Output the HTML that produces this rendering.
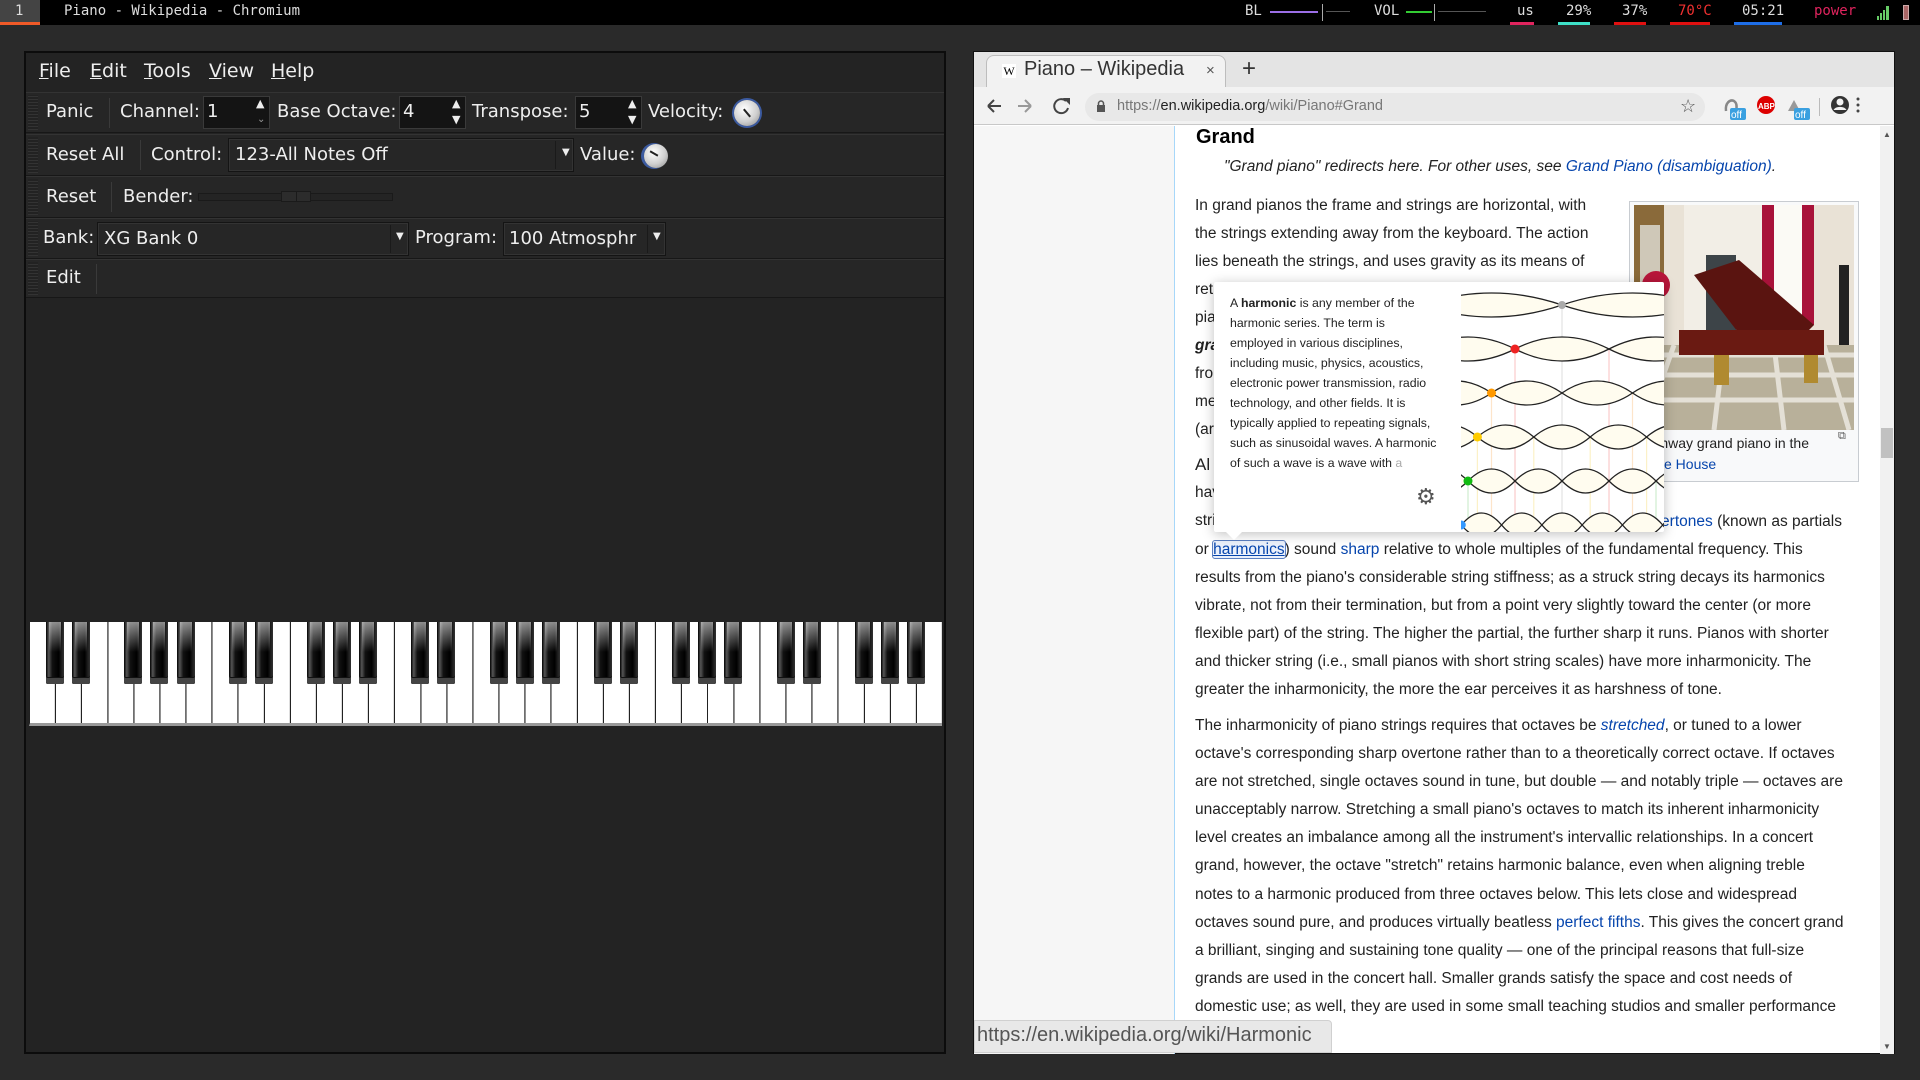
<!DOCTYPE html>
<html><head><meta charset="utf-8"><style>
*{box-sizing:border-box;margin:0;padding:0}
body{width:1920px;height:1080px;overflow:hidden;background:#2a2a2a;position:relative;font-family:"Liberation Sans",sans-serif}
.a{position:absolute}
#top{left:0;top:0;width:1920px;height:25px;background:#000;font-family:"DejaVu Sans Mono","Liberation Mono",monospace;font-size:14px;color:#ddd}
#top span{position:absolute;top:3px;white-space:nowrap}
.ul{position:absolute;top:22px;height:3px}
#lw{left:24px;top:51px;width:922px;height:1003px;background:#232323;border:2px solid #0c0c0c;font-family:"DejaVu Sans",sans-serif;font-size:18px;color:#eee}
.row{position:absolute;left:0;width:918px;background:#262626;border-top:1px solid #333;border-bottom:1px solid #171717}
.row:before{content:"";position:absolute;left:2px;top:2px;bottom:2px;width:10px;background:repeating-linear-gradient(0deg,#333 0 1px,#222 1px 3px)}
.t{position:absolute;white-space:nowrap}
.sep{position:absolute;width:1px;background:#3a3a3a}
.ent{position:absolute;background:#141414;border:1px solid #3a3a3a}
.cmb{position:absolute;background:#262626;border:1px solid #141414;box-shadow:inset 0 0 0 1px #333}
.knob{position:absolute;border-radius:50%;background:radial-gradient(circle at 40% 35%,#fff,#cfcfcf 55%,#888);box-shadow:0 0 0 2px #3b5aa0}
#bw{left:973px;top:51px;width:922px;height:1003px;background:#fff;border:1px solid #111}
.wl{position:absolute;left:1195px;white-space:nowrap;font-size:15.5px;color:#222;line-height:28px}
a,.lk{color:#0645ad;text-decoration:none}
</style></head><body>
<div id="top" class="a">
 <div class="a" style="left:0;top:0;width:40px;height:25px;background:#444"></div>
 <div class="ul" style="left:0;width:40px;background:#f05a28"></div>
 <span style="left:15px">1</span>
 <span style="left:64px">Piano - Wikipedia - Chromium</span>
 <span style="left:1245px">BL</span>
 <div class="a" style="left:1270px;top:11px;width:48px;height:2px;background:#9b6ee6"></div>
 <div class="a" style="left:1322px;top:4px;width:1px;height:17px;background:#aaa"></div>
 <div class="a" style="left:1326px;top:11px;width:24px;height:1px;background:#555"></div>
 <span style="left:1374px">VOL</span>
 <div class="a" style="left:1406px;top:11px;width:26px;height:2px;background:#3c3"></div>
 <div class="a" style="left:1434px;top:4px;width:1px;height:17px;background:#aaa"></div>
 <div class="a" style="left:1438px;top:11px;width:48px;height:1px;background:#555"></div>
 <span style="left:1517px">us</span><div class="ul" style="left:1510px;width:24px;background:#e0245e"></div>
 <span style="left:1566px">29%</span><div class="ul" style="left:1558px;width:32px;background:#3ee0c8"></div>
 <span style="left:1622px">37%</span><div class="ul" style="left:1614px;width:32px;background:#e01010"></div>
 <span style="left:1678px;color:#f03030">70°C</span><div class="ul" style="left:1670px;width:40px;background:#e01010"></div>
 <span style="left:1742px">05:21</span><div class="ul" style="left:1734px;width:48px;background:#1e6ee8"></div>
 <span style="left:1814px;color:#e0245e">power</span>
 <svg class="a" style="left:1876px;top:5px" width="14" height="15"><path d="M1 15V11h2v4zM4 15V8h2v7zM7 15V5h2v10zM10 15V1h3v14z" fill="#6c6"/></svg>
 <div class="a" style="left:1903px;top:5px;width:6px;height:15px;background:#a66;border:1px solid #caa"></div>
</div>

<div id="lw" class="a">
 <div class="t" style="left:13px;top:7px;font-size:19px"><u>F</u>ile</div>
 <div class="t" style="left:64px;top:7px;font-size:19px"><u>E</u>dit</div>
 <div class="t" style="left:118px;top:7px;font-size:19px"><u>T</u>ools</div>
 <div class="t" style="left:183px;top:7px;font-size:19px"><u>V</u>iew</div>
 <div class="t" style="left:245px;top:7px;font-size:19px"><u>H</u>elp</div>

 <div class="row" style="top:39px;height:41px">
  <div class="t" style="left:20px;top:8px">Panic</div><div class="sep" style="left:83px;top:5px;height:30px"></div>
  <div class="t" style="left:94px;top:8px">Channel:</div>
  <div class="ent" style="left:177px;top:3px;width:67px;height:33px"><div class="t" style="left:3px;top:4px">1</div><div class="t" style="left:52px;top:0;font-size:11px">▲</div><div class="t" style="left:53px;top:17px;font-size:10px;color:#999">⌄</div></div>
  <div class="t" style="left:251px;top:8px">Base Octave:</div>
  <div class="ent" style="left:373px;top:3px;width:67px;height:33px"><div class="t" style="left:3px;top:4px">4</div><div class="t" style="left:52px;top:0;font-size:11px">▲</div><div class="t" style="left:52px;top:16px;font-size:11px">▼</div></div>
  <div class="t" style="left:446px;top:8px">Transpose:</div>
  <div class="ent" style="left:549px;top:3px;width:67px;height:33px"><div class="t" style="left:3px;top:4px">5</div><div class="t" style="left:52px;top:0;font-size:11px">▲</div><div class="t" style="left:52px;top:16px;font-size:11px">▼</div></div>
  <div class="t" style="left:622px;top:8px">Velocity:</div>
  <div class="knob" style="left:708px;top:7px;width:26px;height:26px"><div class="a" style="left:12px;top:8px;width:2px;height:10px;background:#222;transform:rotate(-40deg)"></div></div>
 </div>
 <div class="row" style="top:81px;height:42px">
  <div class="t" style="left:20px;top:9px">Reset All</div><div class="sep" style="left:114px;top:5px;height:30px"></div>
  <div class="t" style="left:125px;top:9px">Control:</div>
  <div class="cmb" style="left:202px;top:3px;width:346px;height:34px"><div class="t" style="left:6px;top:5px">123-All Notes Off</div><div class="sep" style="left:326px;top:2px;height:28px;background:#1a1a1a"></div><div class="t" style="left:333px;top:8px;font-size:10px">▼</div></div>
  <div class="t" style="left:554px;top:9px">Value:</div>
  <div class="knob" style="left:618px;top:9px;width:24px;height:24px;box-shadow:-2px 0 0 1px #3b5aa0"><div class="a" style="left:9px;top:5px;width:2px;height:9px;background:#222;transform:rotate(-60deg)"></div></div>
 </div>
 <div class="row" style="top:123px;height:42px">
  <div class="t" style="left:20px;top:9px">Reset</div><div class="sep" style="left:85px;top:5px;height:30px"></div>
  <div class="t" style="left:97px;top:9px">Bender:</div>
  <div class="a" style="left:172px;top:16px;width:195px;height:8px;border:1px solid #1a1a1a;background:#242424"></div>
  <div class="a" style="left:255px;top:14px;width:30px;height:11px;border:1px solid #1a1a1a;background:#2c2c2c"><div class="a" style="left:14px;top:0;width:1px;height:9px;background:#1a1a1a"></div></div>
 </div>
 <div class="row" style="top:165px;height:41px">
  <div class="t" style="left:17px;top:8px">Bank:</div>
  <div class="cmb" style="left:71px;top:3px;width:312px;height:34px"><div class="t" style="left:6px;top:5px">XG Bank 0</div><div class="sep" style="left:292px;top:2px;height:28px;background:#1a1a1a"></div><div class="t" style="left:298px;top:8px;font-size:10px">▼</div></div>
  <div class="t" style="left:389px;top:8px">Program:</div>
  <div class="cmb" style="left:477px;top:3px;width:163px;height:34px"><div class="t" style="left:5px;top:5px">100 Atmosphr</div><div class="sep" style="left:143px;top:2px;height:28px;background:#1a1a1a"></div><div class="t" style="left:149px;top:8px;font-size:10px">▼</div></div>
 </div>
 <div class="row" style="top:206px;height:39px">
  <div class="t" style="left:20px;top:7px">Edit</div><div class="sep" style="left:70px;top:4px;height:30px"></div>
 </div>

 <div class="a" style="left:3px;top:569px;width:913px;height:104px;background:repeating-linear-gradient(90deg,#fff 0 24.6px,#bbb 24.6px 25.1px,#222 25.1px 26.086px);border-bottom:3px solid #999;border-left:1px solid #222"></div>
</div>

<div id="bw" class="a">
 <div class="a" style="left:0;top:0;width:920px;height:35px;background:#e4e4e4"></div>
 <div class="a" style="left:12px;top:3px;width:240px;height:33px;background:#f2f2f2;border:1px solid #bdbdbd;border-bottom:none;border-radius:8px 8px 0 0"></div>
 <div class="a" style="left:28px;top:12px;width:14px;height:14px;background:#fff;font-family:'Liberation Serif',serif;font-size:12px;text-align:center;line-height:14px">W</div>
 <div class="t" style="left:50px;top:6px;font-size:20px;color:#333">Piano – Wikipedia</div>
 <div class="t" style="left:232px;top:10px;font-size:15px;color:#555">×</div>
 <div class="t" style="left:268px;top:3px;font-size:24px;color:#333">+</div>
 <div class="a" style="left:0;top:35px;width:920px;height:38px;background:#f2f2f2;border-bottom:1px solid #c8c8c8"></div>
 <svg class="a" style="left:12px;top:45px" width="90" height="18"><g stroke="#444" stroke-width="2" fill="none"><path d="M2 9H15M2 9L8 3M2 9L8 15"/><path d="M45 9H32M45 9L39 3M45 9L39 15" stroke="#999"/><path d="M80 4A7 7 0 1 0 82 11"/></g><path d="M77 1L84 1L84 8Z" fill="#444"/></svg>
 <div class="a" style="left:111px;top:41px;width:620px;height:28px;background:#e8e8e8;border-radius:14px"></div>
 <svg class="a" style="left:122px;top:48px" width="10" height="13"><rect x="1" y="5" width="8" height="7" fill="#555"/><path d="M2.5 5V3.5a2.5 2.5 0 0 1 5 0V5" stroke="#555" stroke-width="1.5" fill="none"/></svg>
 <div class="t" style="left:143px;top:46px;font-size:14.5px;color:#777">https://<span style="color:#222">en.wikipedia.org</span>/wiki/Piano#Grand</div>
 <div class="t" style="left:706px;top:44px;font-size:18px;color:#555">☆</div>
 <svg class="a" style="left:748px;top:43px" width="140" height="26">
  <path d="M4 16C3 8 8 4 12 6C15 8 15 12 14 16" stroke="#888" stroke-width="2.5" fill="none"/><rect x="8" y="13" width="16" height="12" rx="2" fill="#3aa0e0"/><text x="9" y="23" font-size="10" fill="#fff" font-family="Liberation Sans">off</text>
  <circle cx="44" cy="10" r="9" fill="#d00"/><text x="36" y="14" font-size="8" fill="#fff" font-weight="bold" font-family="Liberation Sans">ABP</text>
  <path d="M66 16L72 5L78 16Z" fill="#999"/><rect x="72" y="13" width="16" height="12" rx="2" fill="#3aa0e0"/><text x="73" y="23" font-size="10" fill="#fff" font-family="Liberation Sans">off</text>
  <rect x="97" y="3" width="1" height="18" fill="#bbb"/>
  <circle cx="118" cy="10" r="9" fill="#333"/><circle cx="118" cy="7" r="3.5" fill="#f2f2f2"/><path d="M111.5 15a7 5 0 0 1 13 0" fill="#f2f2f2"/>
  <circle cx="136" cy="4" r="1.5" fill="#444"/><circle cx="136" cy="10" r="1.5" fill="#444"/><circle cx="136" cy="16" r="1.5" fill="#444"/>
 </svg>
 <div class="a" style="left:0;top:74px;width:201px;height:928px;background:#f6f6f6;border-right:1px solid #a7d7f9"></div>
 <div class="a" style="left:906px;top:74px;width:14px;height:928px;background:#f1f1f1"></div>
 <div class="a" style="left:907px;top:376px;width:12px;height:30px;background:#c1c1c1"></div>
 <div class="t" style="left:909px;top:78px;font-size:8px;color:#555">▲</div>
 <div class="t" style="left:909px;top:990px;font-size:8px;color:#555">▼</div>
</div>

<div class="t" style="left:1196px;top:126px;font-size:20px;font-weight:bold;color:#000">Grand</div>
<div class="t" style="left:1224px;top:158px;font-size:15.5px;font-style:italic;color:#222">"Grand piano" redirects here. For other uses, see <a>Grand Piano (disambiguation)</a>.</div>

<div class="wl" style="top:192px">In grand pianos the frame and strings are horizontal, with<br>the strings extending away from the keyboard. The action<br>lies beneath the strings, and uses gravity as its means of<br>return to a state of rest. There are many sizes of grand<br>piano. A rough generalization distinguishes the concert<br><b><i>grand</i></b> (between 2.2 m to 3 m long) from the parlor<br>from the smaller baby grand and the<br>medium size grand pianos known<br>(around 1.5 m) and so on.</div>
<div class="wl" style="top:451px;font-size:17px">Al</div>
<div class="wl" style="top:479px">have larger, richer sound and lower<br>strings. Inharmonicity is the degree</div>
<div class="t" style="right:78px;top:508px;font-size:15.5px;color:#222;line-height:28px"><span class="lk">overtones</span> (known as partials</div>
<div class="wl" style="top:536px">or <span class="lk" style="text-decoration:underline;outline:1px solid #5b7fc0;border-radius:2px;background:#eaf0fb">harmonics</span>) sound <span class="lk">sharp</span> relative to whole multiples of the fundamental frequency. This<br>results from the piano's considerable string stiffness; as a struck string decays its harmonics<br>vibrate, not from their termination, but from a point very slightly toward the center (or more<br>flexible part) of the string. The higher the partial, the further sharp it runs. Pianos with shorter<br>and thicker string (i.e., small pianos with short string scales) have more inharmonicity. The<br>greater the inharmonicity, the more the ear perceives it as harshness of tone.</div>
<div class="wl" style="top:712px;line-height:28.1px">The inharmonicity of piano strings requires that octaves be <i class="lk">stretched</i>, or tuned to a lower<br>octave's corresponding sharp overtone rather than to a theoretically correct octave. If octaves<br>are not stretched, single octaves sound in tune, but double — and notably triple — octaves are<br>unacceptably narrow. Stretching a small piano's octaves to match its inherent inharmonicity<br>level creates an imbalance among all the instrument's intervallic relationships. In a concert<br>grand, however, the octave "stretch" retains harmonic balance, even when aligning treble<br>notes to a harmonic produced from three octaves below. This lets close and widespread<br>octaves sound pure, and produces virtually beatless <span class="lk">perfect fifths</span>. This gives the concert grand<br>a brilliant, singing and sustaining tone quality — one of the principal reasons that full-size<br>grands are used in the concert hall. Smaller grands satisfy the space and cost needs of<br>domestic use; as well, they are used in some small teaching studios and smaller performance</div>

<div class="a" style="left:1629px;top:201px;width:230px;height:281px;background:#f8f9fa;border:1px solid #c8ccd1"></div>
<svg class="a" style="left:1634px;top:205px" width="220" height="225">
 <rect width="220" height="225" fill="#e9e2d6"/>
 <rect x="0" y="0" width="30" height="120" fill="#8a6a3a"/><rect x="6" y="20" width="20" height="90" fill="#cfc8b8"/>
 <rect x="50" y="0" width="80" height="140" fill="#f2eee6"/><rect x="72" y="50" width="30" height="80" fill="#3d4448"/>
 <rect x="128" y="0" width="12" height="120" fill="#a8123a"/><rect x="168" y="0" width="12" height="120" fill="#a8123a"/>
 <rect x="140" y="0" width="28" height="110" fill="#fbfaf5"/>
 <circle cx="22" cy="80" r="14" fill="#b8163a"/>
 <rect x="205" y="60" width="10" height="110" fill="#222"/>
 <path d="M0 140L220 140L220 225L0 225Z" fill="#b8b09a"/>
 <path d="M0 150L220 150M0 170L220 170M0 195L220 195M40 140L10 225M90 140L80 225M140 140L150 225M190 140L215 225" stroke="#e4e0d6" stroke-width="5"/>
 <path d="M60 70L105 55L180 120L170 130L110 135Z" fill="#5a1410"/>
 <rect x="45" y="125" width="145" height="25" fill="#6a1a12"/>
 <rect x="80" y="150" width="15" height="30" fill="#b08a30"/><rect x="170" y="150" width="14" height="28" fill="#b08a30"/>
</svg>
<div class="t" style="right:111px;top:435px;font-size:14px;color:#222">A Steinway grand piano in the</div>
<div class="t" style="left:1636px;top:456px;font-size:14px"><span class="lk">White House</span></div>
<div class="t" style="left:1838px;top:430px;font-size:11px;color:#555">⧉</div>

<div class="a" style="left:1214px;top:282px;width:450px;height:250px;background:#fff;border-radius:2px;box-shadow:0 2px 12px rgba(0,0,0,.25);overflow:hidden">
 <div class="a" style="left:16px;top:11px;white-space:nowrap;font-family:'Liberation Sans',sans-serif;font-size:12.3px;line-height:20px;color:#222">A <b>harmonic</b> is any member of the<br>harmonic series. The term is<br>employed in various disciplines,<br>including music, physics, acoustics,<br>electronic power transmission, radio<br>technology, and other fields. It is<br>typically applied to repeating signals,<br>such as sinusoidal waves. A harmonic<br>of such a wave is a wave with <span style="color:#aaa">a</span></div>
 <div class="t" style="left:202px;top:202px;font-size:22px;color:#555">⚙</div>
 <svg class="a" style="left:247px;top:0" width="203" height="250" viewBox="1461 282 203 250">
  <g stroke-width="1.2" opacity=".55">
   <path d="M1562 305V532" stroke="#ccc"/><path d="M1515 349V532M1609 349V532" stroke="#f7a0a0"/>
   <path d="M1491.5 393V532M1632.5 393V532" stroke="#fcd0a0"/><path d="M1477.4 437V532M1533.8 437V532M1590.2 437V532M1646.6 437V532" stroke="#fbe79a"/>
   <path d="M1468 481V532M1656 481V532" stroke="#a8e0a8"/>
  </g>
  <g fill="#fffcef" stroke="#222" stroke-width="1.3">
   <path d="M1421 305Q1491.5 281 1562 305T1703 305"/><path d="M1421 305Q1491.5 329 1562 305T1703 305"/>
   <path d="M1421 349Q1468 325 1515 349T1609 349T1703 349"/><path d="M1421 349Q1468 373 1515 349T1609 349T1703 349"/>
   <path d="M1421 393Q1456.25 369 1491.5 393T1562 393T1632.5 393T1703 393"/><path d="M1421 393Q1456.25 417 1491.5 393T1562 393T1632.5 393T1703 393"/>
   <path d="M1421 437Q1449.2 413 1477.4 437T1533.8 437T1590.2 437T1646.6 437T1703 437"/><path d="M1421 437Q1449.2 461 1477.4 437T1533.8 437T1590.2 437T1646.6 437T1703 437"/>
   <path d="M1421 481Q1444.5 457 1468 481T1515 481T1562 481T1609 481T1656 481T1703 481"/><path d="M1421 481Q1444.5 505 1468 481T1515 481T1562 481T1609 481T1656 481T1703 481"/>
   <path d="M1421 525Q1441.14 501 1461.29 525T1501.57 525T1541.86 525T1582.14 525T1622.43 525T1662.71 525T1703 525"/><path d="M1421 525Q1441.14 549 1461.29 525T1501.57 525T1541.86 525T1582.14 525T1622.43 525T1662.71 525T1703 525"/>
  </g>
  <circle cx="1562" cy="305" r="4" fill="#aaa"/><circle cx="1515" cy="349" r="4.5" fill="#e22"/><circle cx="1491.5" cy="393" r="4.5" fill="#f90"/><circle cx="1477.4" cy="437" r="4.5" fill="#fc0"/><circle cx="1468" cy="481" r="4.5" fill="#1b1"/><circle cx="1461.3" cy="525" r="4.5" fill="#39f"/>
 </svg>
</div>
<div class="a" style="left:1226px;top:532px;width:0;height:0;border-left:8px solid transparent;border-right:8px solid transparent;border-top:8px solid #fff"></div>

<div class="a" style="left:974px;top:1020px;width:358px;height:33px;background:#e8e8e8;border:1px solid #d0d0d0;border-radius:0 4px 0 0"></div>
<div class="t" style="left:977px;top:1024px;font-size:20px;color:#555">https://en.wikipedia.org/wiki/Harmonic</div>

<style>
.bk{position:absolute;top:0;width:18px;height:62px;border-radius:0 0 2px 2px;background:linear-gradient(90deg,#000 0,#555 15%,#111 35%,#000 70%,#333 100%);box-shadow:inset 0 -6px 0 #444,inset 0 -7px 0 #111}
.bk:after{content:"";position:absolute;left:3px;right:3px;top:0;height:30px;background:linear-gradient(180deg,rgba(255,255,255,.55),rgba(255,255,255,0))}
</style>
<div class="a" style="left:29px;top:622px">
<div class="bk" style="left:17px"></div><div class="bk" style="left:43px"></div><div class="bk" style="left:95px"></div><div class="bk" style="left:121px"></div><div class="bk" style="left:148px"></div>
<div class="bk" style="left:200px"></div><div class="bk" style="left:226px"></div><div class="bk" style="left:278px"></div><div class="bk" style="left:304px"></div><div class="bk" style="left:330px"></div>
<div class="bk" style="left:382px"></div><div class="bk" style="left:408px"></div><div class="bk" style="left:461px"></div><div class="bk" style="left:487px"></div><div class="bk" style="left:513px"></div>
<div class="bk" style="left:565px"></div><div class="bk" style="left:591px"></div><div class="bk" style="left:643px"></div><div class="bk" style="left:669px"></div><div class="bk" style="left:695px"></div>
<div class="bk" style="left:748px"></div><div class="bk" style="left:774px"></div><div class="bk" style="left:826px"></div><div class="bk" style="left:852px"></div><div class="bk" style="left:878px"></div>
</div>
</body></html>
